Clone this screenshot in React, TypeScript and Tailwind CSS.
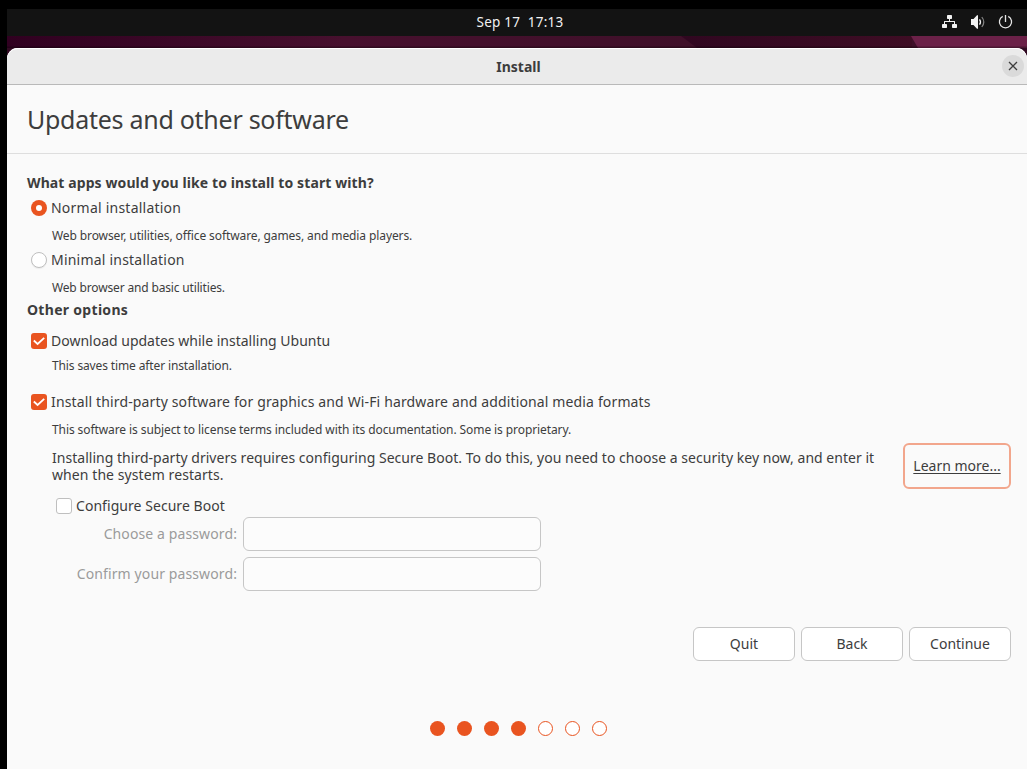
import React from 'react';

const Check = ({ checked = false }: { checked?: boolean }) => (
  <span
    className={
      checked
        ? 'flex size-4 shrink-0 items-center justify-center rounded-[3px] bg-[#e95420]'
        : 'block size-4 shrink-0 rounded-[3px] border border-[#bfbfbf] bg-white'
    }
  >
    {checked && (
      <svg width="16" height="16" viewBox="0 0 16 16" fill="none" stroke="white" strokeWidth="1.8">
        <path d="M2.800 7.500L6.600 11L13.200 4.900" />
      </svg>
    )}
  </span>
);

const Radio = ({ checked = false }: { checked?: boolean }) => (
  <span
    className={
      checked
        ? 'flex size-4 shrink-0 items-center justify-center rounded-full bg-[#e95420]'
        : 'block size-4 shrink-0 rounded-full border border-[#bfbfbf] bg-white shadow-[0_1px_1px_rgba(0,0,0,0.06)]'
    }
  >
    {checked && <span className="size-[6px] rounded-full bg-white" />}
  </span>
);

const Option = ({ control, className, children }: { control: React.ReactNode; className: string; children: React.ReactNode }) => (
  <label className={`flex h-5 items-center gap-1 whitespace-nowrap ${className}`}>
    {control}
    <span className="pb-[2px]">{children}</span>
  </label>
);

const Note = ({ className, children }: { className: string; children: React.ReactNode }) => (
  <p className={`ml-[25px] h-5 whitespace-nowrap text-[12px] leading-5 ${className}`}>{children}</p>
);

const Field = ({ label, className }: { label: string; className: string }) => (
  <div className={`flex h-[34px] items-center gap-[6px] ${className}`}>
    <span className="flex w-[210px] justify-end whitespace-nowrap pb-[2px] tracking-[0.11px] text-[#9b9b9b]">{label}</span>
    <input disabled type="password" className="h-[34px] w-[298px] rounded-[6px] border border-[#c6c6c6] bg-[#fcfcfc]" />
  </div>
);

const steps = [true, true, true, true, false, false, false];

export default function App() {
  return (
    <div className="flex h-[769px] w-[1027px] flex-col overflow-hidden bg-black pl-[7px] pt-[9px] font-['Noto_Sans','Open_Sans',sans-serif] text-[14px] text-[#3d3d3d]">
      <header className="grid h-[27px] shrink-0 grid-cols-[1fr_auto_1fr] items-center bg-[#131313] pb-px text-[#f2f2f2]">
        <span />
        <time className="whitespace-pre pb-px pl-[6px] text-[13.5px] leading-5 tracking-[0.23px]">Sep 17  17:13</time>
        <div className="flex justify-end gap-[12px] pr-[13px]">
          <svg width="16" height="16" viewBox="0 0 16 16" fill="#f2f2f2">
            <rect x="5" y="1" width="5" height="4" rx="0.7" />
            <path d="M7 5v2H2.500Q2 7 2 7.500V11H3V8H12V11H13V7.500Q13 7 12.500 7H8V5Z" />
            <rect x="0" y="10" width="5" height="4" rx="0.7" />
            <rect x="10" y="10" width="5" height="4" rx="0.7" />
          </svg>
          <svg width="16" height="16" viewBox="0 0 16 16" fill="none">
            <path d="M1 5h2.500L7 1.200h1v13.600H7L3.500 11H1Z" fill="#f2f2f2" />
            <path d="M9.500 5.300Q11.500 8 9.500 10.700" stroke="#f2f2f2" strokeWidth="1.300" />
            <path d="M11.800 3Q15.800 8 11.800 13" stroke="#858585" strokeWidth="1.200" />
          </svg>
          <svg width="16" height="16" viewBox="0 0 16 16" fill="none" stroke="#e5e5e5" strokeWidth="1.300">
            <path d="M4.700 2.400A6.100 6.100 0 1 0 10.300 2.400" />
            <path d="M7.500 1v7" />
          </svg>
        </div>
      </header>

      <div className="flex grow flex-col bg-[#310a22]">
        <svg className="block h-[12px] w-full shrink-0" viewBox="0 0 1020 12" preserveAspectRatio="none">
          <defs>
            <linearGradient id="wall" x1="0" x2="1">
              <stop offset="0" stopColor="#300020" />
              <stop offset="0.33" stopColor="#47102e" />
              <stop offset="0.67" stopColor="#3f1029" />
              <stop offset="1" stopColor="#3f1029" />
            </linearGradient>
            <linearGradient id="fold" x1="0" x2="1">
              <stop offset="0" stopColor="#300720" />
              <stop offset="1" stopColor="#3e0d24" />
            </linearGradient>
          </defs>
          <rect width="1020" height="12" fill="url(#wall)" />
          <path d="M674 0H905V12H690Z" fill="url(#fold)" />
          <path d="M904 0H1020V12H911Z" fill="#6b2148" />
          <rect y="10.500" width="1020" height="1.500" fill="#000" opacity="0.3" />
        </svg>

        <main className="flex grow flex-col rounded-t-[11px] bg-[#fafafa]">
          <div className="grid h-[37px] shrink-0 grid-cols-[1fr_auto_1fr] items-center rounded-t-[11px] border-b border-[#b9b9b9] bg-[#ebebeb] shadow-[inset_0_1px_0_white]">
            <span />
            <h1 className="pl-[3px] pt-[2px] text-[14px] font-bold leading-5">Install</h1>
            <div className="flex justify-end pr-[3px]">
              <button className="flex size-[22px] items-center justify-center rounded-full bg-[#dadada]" aria-label="Close">
                <svg width="10" height="10" viewBox="0 0 10 10" fill="none" stroke="#3d3d3d" strokeWidth="1.300">
                  <path d="M1 1l8 8M9 1l-8 8" />
                </svg>
              </button>
            </div>
          </div>

          <div className="flex h-[69px] shrink-0 items-center border-b border-[#dedede] pl-[20px]">
            <h2 className="whitespace-nowrap text-[25px] leading-8 tracking-[-0.27px]">Updates and other software</h2>
          </div>

          <div className="flex flex-col pl-[20px] pr-[16px] pt-[19px]">
            <h3 className="h-5 whitespace-nowrap font-bold leading-5 tracking-[0.1px]">What apps would you like to install to start with?</h3>
            <Option className="ml-1 mt-[5px] tracking-[0.23px]" control={<Radio checked />}>
              Normal installation
            </Option>
            <Note className="mt-2 tracking-[-0.1px]">Web browser, utilities, office software, games, and media players.</Note>
            <Option className="ml-1 mt-1 tracking-[0.21px]" control={<Radio />}>
              Minimal installation
            </Option>
            <Note className="mt-2 tracking-[-0.16px]">Web browser and basic utilities.</Note>
            <h3 className="mt-[2px] h-5 whitespace-nowrap font-bold leading-5 tracking-[0.3px]">Other options</h3>
            <Option className="ml-1 mt-[11px]" control={<Check checked />}>
              Download updates while installing Ubuntu
            </Option>
            <Note className="mt-[5px] tracking-[-0.13px]">This saves time after installation.</Note>
            <Option className="ml-1 mt-[16px] tracking-[0.14px]" control={<Check checked />}>
              Install third-party software for graphics and Wi-Fi hardware and additional media formats
            </Option>
            <Note className="mt-2 tracking-[-0.09px]">This software is subject to license terms included with its documentation. Some is proprietary.</Note>

            <div className="ml-[25px] mt-[3px] flex h-[46px] items-center justify-between">
              <p className="whitespace-nowrap leading-[17px]">
                <span className="tracking-[0.023px]">Installing third-party drivers requires configuring Secure Boot. To do this, you need to choose a security key now, and enter it</span>
                <br />
                <span className="tracking-[0.08px]">when the system restarts.</span>
              </p>
              <a className="flex h-[46px] w-[108px] shrink-0 items-center justify-center whitespace-nowrap rounded-[6px] border-2 border-[#f2a68c] pb-[2px] underline underline-offset-2">
                Learn more...
              </a>
            </div>

            <Option className="ml-[29px] mt-[7px] tracking-[0.05px]" control={<Check />}>
              Configure Secure Boot
            </Option>
            <Field className="mt-px" label="Choose a password:" />
            <Field className="mt-[6px]" label="Confirm your password:" />

            <div className="mt-[36px] flex justify-end gap-[6px]">
              {['Quit', 'Back', 'Continue'].map((label) => (
                <button key={label} className="h-[34px] w-[102px] rounded-[6px] border border-[#c6c6c6] bg-white pb-[2px]">
                  {label}
                </button>
              ))}
            </div>
          </div>

          <div className="mt-[60px] flex gap-[12px] pl-[423px]">
            {steps.map((done, i) => (
              <span
                key={i}
                className={done ? 'size-[15px] rounded-full bg-[#e95420]' : 'size-[15px] rounded-full border border-[#e95420] bg-white'}
              />
            ))}
          </div>
        </main>
      </div>
    </div>
  );
}
